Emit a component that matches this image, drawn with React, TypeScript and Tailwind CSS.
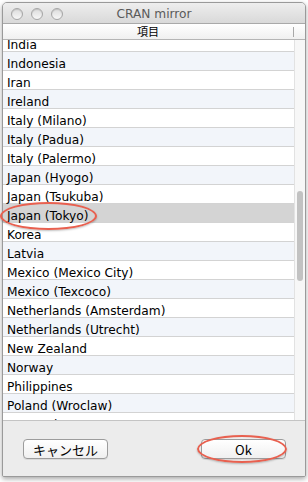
const rows = [
  "India",
  "Indonesia",
  "Iran",
  "Ireland",
  "Italy (Milano)",
  "Italy (Padua)",
  "Italy (Palermo)",
  "Japan (Hyogo)",
  "Japan (Tsukuba)",
  "Japan (Tokyo)",
  "Korea",
  "Latvia",
  "Mexico (Mexico City)",
  "Mexico (Texcoco)",
  "Netherlands (Amsterdam)",
  "Netherlands (Utrecht)",
  "New Zealand",
  "Norway",
  "Philippines",
  "Poland (Wroclaw)",
  "Portugal",
];

const SELECTED = "Japan (Tokyo)";

function TrafficLight() {
  return (
    <span className="block h-[12px] w-[12px] rounded-full border border-[#a6a6a6] bg-gradient-to-b from-[#dcdcdc] to-[#f7f7f7] shadow-[inset_0_1px_1px_rgba(0,0,0,0.12)]" />
  );
}

function Button({ label }: { label: string }) {
  return (
    <button className="flex h-[20px] w-[85px] items-center justify-center rounded-[4px] border border-[#9c9c9c] bg-gradient-to-b from-white to-[#f0f0f0] text-[13px] leading-none text-black shadow-[0_1px_0_rgba(0,0,0,0.08)] [font-family:'Noto_Sans_CJK_JP','DejaVu_Sans',sans-serif]">
      {label}
    </button>
  );
}

export default function App() {
  return (
    <div className="relative h-[482px] w-[308px] overflow-hidden bg-white pl-[2px] pt-[2px] [font-family:'DejaVu_Sans','Noto_Sans_CJK_JP',sans-serif]">
      <div className="flex h-[475px] w-[304px] flex-col overflow-hidden rounded-t-[5px] rounded-b-[2px] border border-[#9a9a9a] bg-[#ececec] shadow-[0_2px_5px_rgba(0,0,0,0.35)]">
        {/* title bar */}
        <div className="relative flex h-[21px] shrink-0 items-center border-b border-[#a9a9a9] bg-gradient-to-b from-[#eeeeee] to-[#d9d9d9] pt-[2px]">
          <div className="flex gap-[8px] pl-[8px]">
            <TrafficLight />
            <TrafficLight />
            <TrafficLight />
          </div>
          <div className="flex-1 pr-[60px] text-center text-[12.2px] leading-none text-[#5a5a5a]">CRAN mirror</div>
        </div>

        {/* table header */}
        <div className="flex h-[16px] shrink-0 items-center border-b border-[#b5b5b5] bg-gradient-to-b from-white to-[#f0f0f0]">
          <div className="flex-1 text-center text-[11px] leading-none text-black [font-family:'Noto_Sans_CJK_JP',sans-serif]">
            項目
          </div>
          <div className="h-[10px] w-px bg-[#a8a8a8]" />
          <div className="w-[11px]" />
        </div>

        {/* rows + scrollbar */}
        <div className="flex h-[380px] shrink-0 bg-white">
          <div className="flex-1 overflow-hidden">
            <div className="-mt-[7px] flex flex-col">
              {rows.map((r, i) => {
                const sel = r === SELECTED;
                const bg = sel ? "bg-[#d4d4d4]" : i % 2 === 1 ? "bg-[#f2f5fa]" : "bg-white";
                return (
                  <div
                    key={r}
                    className={`h-[19px] shrink-0 border-b border-[#d3d3d3] pl-[4px] pt-[3px] text-[12.2px] leading-[18px] text-black ${bg}`}
                  >
                    {r}
                  </div>
                );
              })}
            </div>
          </div>
          <div className="flex w-[11px] flex-col border-l border-[#e2e2e2] bg-[#f7f7f7] pl-[2px]">
            <div className="mt-[151px] h-[90px] w-[6px] rounded-full bg-[#c2c2c2]" />
          </div>
        </div>

        {/* bottom buttons */}
        <div className="flex flex-1 items-start justify-between border-t border-[#c4c4c4] bg-[#ececec] pl-[20px] pr-[19px] pt-[18px]">
          <Button label="キャンセル" />
          <Button label="Ok" />
        </div>
      </div>

      {/* annotation ellipses */}
      <div className="absolute left-[0px] top-[202px] h-[28px] w-[97px] rounded-[50%] border-[2.5px] border-[#e8604f] shadow-[0_1px_2px_rgba(0,0,0,0.25)]" />
      <div className="absolute left-[197px] top-[435px] h-[28px] w-[90px] rounded-[50%] border-[2.5px] border-[#e8604f] shadow-[0_1px_2px_rgba(0,0,0,0.25)]" />
    </div>
  );
}
